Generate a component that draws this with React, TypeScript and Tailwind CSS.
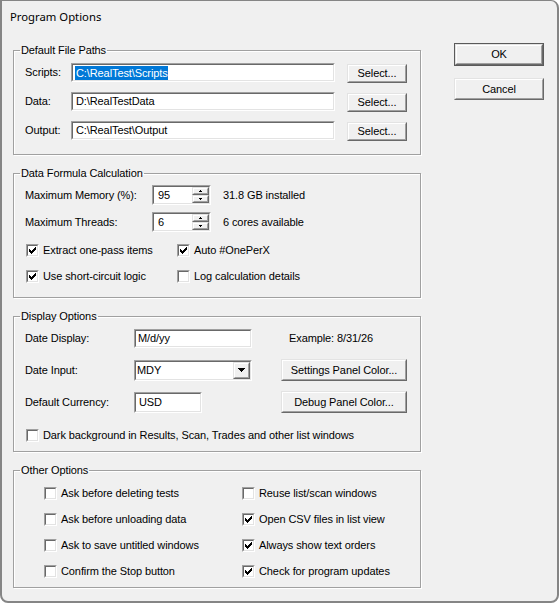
import React from "react";

const FONT = "font-['Liberation_Sans',Arial,sans-serif]";

function Sunken({ className = "", innerClassName = "", children }: { className?: string; innerClassName?: string; children?: React.ReactNode }) {
  return (
    <div className={`border border-t-[#a0a0a0] border-l-[#a0a0a0] border-r-white border-b-white ${className}`}>
      <div className={`w-full h-full border border-t-[#696969] border-l-[#696969] border-r-[#e3e3e3] border-b-[#e3e3e3] bg-white flex items-center overflow-hidden ${innerClassName}`}>
        {children}
      </div>
    </div>
  );
}

function Raised({ className = "", innerClassName = "", children }: { className?: string; innerClassName?: string; children?: React.ReactNode }) {
  return (
    <div className={`border border-t-[#e3e3e3] border-l-[#e3e3e3] border-r-[#696969] border-b-[#696969] ${className}`}>
      <div className={`w-full h-full border border-t-white border-l-white border-r-[#a0a0a0] border-b-[#a0a0a0] bg-[#f0f0f0] flex items-center justify-center ${innerClassName}`}>
        {children}
      </div>
    </div>
  );
}

function Check({ checked }: { checked: boolean }) {
  return (
    <Sunken className="w-[13px] h-[13px] shrink-0" innerClassName="justify-center">
      {checked && (
        <svg width="7" height="7" viewBox="0 0 7 7" shapeRendering="crispEdges">
          <path d="M0 2h1v3H0z M1 3h1v3H1z M2 4h1v3H2z M3 3h1v3H3z M4 2h1v3H4z M5 1h1v3H5z M6 0h1v3H6z" fill="#000" />
        </svg>
      )}
    </Sunken>
  );
}

function CheckItem({ checked, label, className = "" }: { checked: boolean; label: string; className?: string }) {
  return (
    <div className={`flex items-center ${className}`}>
      <Check checked={checked} />
      <span className="ml-[4px] whitespace-nowrap">{label}</span>
    </div>
  );
}

function Spin({ value }: { value: string }) {
  return (
    <Sunken className="w-[59px] h-[20px]" innerClassName="">
      <span className="flex-1 pl-[4px]">{value}</span>
      <div className="flex flex-col w-[17px] h-full">
        <Raised className="h-[8px] w-full">
          <svg width="3" height="2" viewBox="0 0 3 2" shapeRendering="crispEdges">
            <path d="M1 0h1v1H1z M0 1h3v1H0z" fill="#000" />
          </svg>
        </Raised>
        <Raised className="h-[8px] w-full">
          <svg width="3" height="2" viewBox="0 0 3 2" shapeRendering="crispEdges">
            <path d="M0 0h3v1H0z M1 1h1v1H1z" fill="#000" />
          </svg>
        </Raised>
      </div>
    </Sunken>
  );
}

function Group({ title, children, bodyClass }: { title: string; children: React.ReactNode; bodyClass: string }) {
  return (
    <fieldset className="m-0 p-0 min-w-0 w-full border border-[#a0a0a0] shadow-[1px_1px_0_#fff,inset_1px_1px_0_#fff]">
      <legend className="ml-[6px] px-[1px] leading-[15px]">{title}</legend>
      <div className={`px-[11px] flex flex-col ${bodyClass}`}>{children}</div>
    </fieldset>
  );
}

function PathRow({ label, children }: { label: string; children: React.ReactNode }) {
  return (
    <div className="flex items-start h-[19px]">
      <div className="w-[46px] leading-[19px]">{label}</div>
      <Sunken className="w-[264px] h-[19px]" innerClassName="pl-[2px]">
        {children}
      </Sunken>
      <Raised className="ml-[12px] w-[60px] h-[19px] mt-[1px]">Select...</Raised>
    </div>
  );
}

export default function App() {
  return (
    <div className={`${FONT} text-[11px] tracking-[-0.1px] text-black w-[559px] h-[603px] bg-[#f0f0f0] border-[#858585] border-t border-l-2 border-r-2 border-b-2 rounded-tr-[8px] rounded-b-[8px] overflow-hidden flex flex-col`}>
      <div className="h-[29px] pl-[8px] pt-[3px] flex items-center text-[11.3px] tracking-normal font-['Noto_Sans','Liberation_Sans',sans-serif]">
        Program Options
      </div>
      <div className="flex pl-[11px] pt-[13px]">
        <div className="w-[408px] flex flex-col gap-[11px]">
          <Group title="Default File Paths" bodyClass="pt-[5px] pb-[14px] gap-[10px]">
            <PathRow label="Scripts:">
              <span className="bg-[#0078d7] text-white pl-[1px] leading-[14px]">{"C:\\RealTest\\Scripts"}</span>
            </PathRow>
            <PathRow label="Data:">
              <span className="pl-[1px]">{"D:\\RealTestData"}</span>
            </PathRow>
            <PathRow label="Output:">
              <span className="pl-[1px]">{"C:\\RealTest\\Output"}</span>
            </PathRow>
          </Group>

          <Group title="Data Formula Calculation" bodyClass="pt-[4px] pb-[11px]">
            <div className="flex items-center h-[20px]">
              <div className="w-[127px]">Maximum Memory (%):</div>
              <Spin value="95" />
              <span className="ml-[12px]">31.8 GB installed</span>
            </div>
            <div className="flex items-center h-[20px] mt-[7px]">
              <div className="w-[127px]">Maximum Threads:</div>
              <Spin value="6" />
              <span className="ml-[12px]">6 cores available</span>
            </div>
            <div className="flex items-center h-[20px] mt-[8px] pl-[1px]">
              <CheckItem checked label="Extract one-pass items" className="w-[151px]" />
              <CheckItem checked label="Auto #OnePerX" />
            </div>
            <div className="flex items-center h-[20px] mt-[6px] pl-[1px]">
              <CheckItem checked label="Use short-circuit logic" className="w-[151px]" />
              <CheckItem checked={false} label="Log calculation details" />
            </div>
          </Group>

          <Group title="Display Options" bodyClass="pt-[5px] pb-[6px]">
            <div className="flex items-center h-[19px]">
              <div className="w-[109px]">Date Display:</div>
              <Sunken className="w-[118px] h-[19px]" innerClassName="pl-[2px]">M/d/yy</Sunken>
              <span className="ml-[37px]">Example: 8/31/26</span>
            </div>
            <div className="flex items-center h-[22px] mt-[11px]">
              <div className="w-[109px]">Date Input:</div>
              <Sunken className="w-[118px] h-[21px]">
                <span className="flex-1 pl-[1px]">MDY</span>
                <Raised className="w-[17px] h-full">
                  <svg width="7" height="4" viewBox="0 0 7 4" shapeRendering="crispEdges">
                    <path d="M0 0h7v1H0z M1 1h5v1H1z M2 2h3v1H2z M3 3h1v1H3z" fill="#000" />
                  </svg>
                </Raised>
              </Sunken>
              <Raised className="ml-[29px] w-[126px] h-[22px]">Settings Panel Color...</Raised>
            </div>
            <div className="flex items-center h-[22px] mt-[10px]">
              <div className="w-[109px]">Default Currency:</div>
              <Sunken className="w-[68px] h-[21px]" innerClassName="pl-[3px]">USD</Sunken>
              <Raised className="ml-[79px] w-[126px] h-[22px]">Debug Panel Color...</Raised>
            </div>
            <div className="flex items-center h-[20px] mt-[12px] pl-[1px]">
              <CheckItem checked={false} label="Dark background in Results, Scan, Trades and other list windows" />
            </div>
          </Group>

          <Group title="Other Options" bodyClass="pt-[5px] pb-[6px] gap-[6px]">
            {[
              ["Ask before deleting tests", false, "Reuse list/scan windows", false],
              ["Ask before unloading data", false, "Open CSV files in list view", true],
              ["Ask to save untitled windows", false, "Always show text orders", true],
              ["Confirm the Stop button", false, "Check for program updates", true],
            ].map((r, i) => (
              <div key={i} className="flex items-center h-[20px] pl-[19px]">
                <CheckItem checked={r[1] as boolean} label={r[0] as string} className="w-[198px]" />
                <CheckItem checked={r[3] as boolean} label={r[2] as string} />
              </div>
            ))}
          </Group>
        </div>

        <div className="ml-[33px] w-[90px] flex flex-col">
          <div className="border border-[#5a5a5a] h-[23px]">
            <Raised className="w-full h-full">OK</Raised>
          </div>
          <Raised className="w-full h-[22px] mt-[12px]">Cancel</Raised>
        </div>
      </div>
    </div>
  );
}
